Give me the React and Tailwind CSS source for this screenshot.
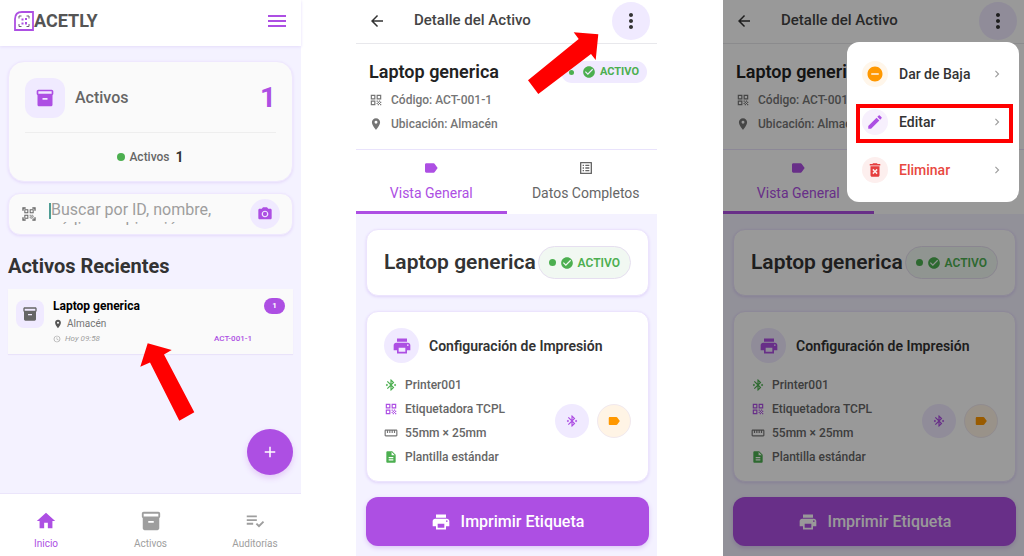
import {
    MdAdd, MdArrowBack, MdBluetoothConnected, MdCheckCircle, MdChevronRight, MdDeleteForever, MdDescription,
    MdEdit, MdHome, MdInventory2, MdLabel, MdListAlt, MdLocationOn, MdMenu, MdMoreVert, MdPhotoCamera,
    MdPlaylistAddCheck, MdPrint, MdQrCode, MdQrCodeScanner, MdRemoveCircle, MdSchedule, MdStraighten
} from 'react-icons/md';

const navItems = [
    { icon: MdHome, label: 'Inicio', color: 'text-[#ad4fe3]' },
    { icon: MdInventory2, label: 'Activos', color: 'text-[#9e9e9e]' },
    { icon: MdPlaylistAddCheck, label: 'Auditorías', color: 'text-[#9e9e9e]' }
];

const printSettings = [
    { icon: MdBluetoothConnected, text: 'Printer001', color: 'text-[#4caf50]' },
    { icon: MdQrCode, text: 'Etiquetadora TCPL', color: 'text-[#ad4fe3]' },
    { icon: MdStraighten, text: '55mm × 25mm', color: 'text-[#757575]' },
    { icon: MdDescription, text: 'Plantilla estándar', color: 'text-[#4caf50]' }
];

const menuItems = [
    { icon: MdRemoveCircle, text: 'Dar de Baja', color: 'text-[#ff9800]', bg: 'bg-[#fff6ea]', label: 'text-[#333]' },
    { icon: MdEdit, text: 'Editar', color: 'text-[#ad4fe3]', bg: 'bg-[#f7f0fd]', label: 'text-[#333]' },
    { icon: MdDeleteForever, text: 'Eliminar', color: 'text-[#e53e3e]', bg: 'bg-[#fdefee]', label: 'text-[#e8483f]' }
];

const Logo = () => (
    <div className="flex items-center">
        <svg viewBox="0 0 20 20" className="h-5 w-5" fill="none" stroke="#ad4fe3">
            <path d="M1 19V8Q1 1 8 1H19V19Z" strokeWidth="1.8" />
            <path d="M5 7.500V5H7.500M12.500 5H15V7.500M5 13V15.500H7.500M12.500 15.500H15V13" stroke="#6b5a78" strokeWidth="1" />
            <path d="M7.500 7.500H9.500V9.500H7.500ZM11 7H13V9H11ZM7.500 11.500H9.500V13.500H7.500ZM11 11H13V13.500H11Z" fill="#ad4fe3" stroke="none" />
        </svg>
        <span className="text-lg font-bold text-[#555]">ACETLY</span>
    </div>
);

const HomeScreen = () => (
    <section className="relative flex min-h-screen min-w-0 flex-1 flex-col bg-[#f4f2ff]">
        <header className="flex h-[46px] items-center justify-between bg-white pr-3 pb-1 pl-3.5 shadow-[0_1px_3px_#e4dcfb]">
            <Logo />
            <button aria-label="Menú" className="text-[#ad4fe3]">
                <MdMenu className="h-6 w-6" />
            </button>
        </header>

        <main className="flex flex-1 flex-col px-2 pt-[15px]">
            {/* Summary */}
            <div className="rounded-2xl border border-[#efe8fe] bg-[#fafafa] px-4 pt-4 pb-3.5 shadow-[0_1px_3px_#e4d8fb]">
                <div className="flex items-center">
                    <div className="flex h-10 w-10 items-center justify-center rounded-xl bg-[#f0eaff]">
                        <MdInventory2 className="h-5 w-5 text-[#ad4fe3]" />
                    </div>
                    <span className="ml-2.5 flex-1 text-base font-medium text-[#666]">Activos</span>
                    <span className="text-[28px] leading-8 font-bold text-[#ad4fe3]">1</span>
                </div>
                <div className="mt-3.5 flex items-center justify-center border-t border-[#eee] pt-3.5">
                    <span className="mr-1 h-2 w-2 rounded-full bg-[#4caf50]" />
                    <span className="text-xs font-medium text-[#666]">Activos</span>
                    <span className="ml-1.5 text-sm font-bold text-[#333]">1</span>
                </div>
            </div>

            {/* Search */}
            <div className="mt-[11px] flex h-[42px] items-center rounded-xl border border-[#efe8fe] bg-[#fafafa] px-3 shadow-[0_1px_3px_#e4d8fb]">
                <MdQrCodeScanner className="h-4 w-4 text-[#666]" />
                <div className="ml-3 flex h-[22px] flex-1 items-center overflow-hidden">
                    <span className="h-4 w-0.5 shrink-0 self-start bg-[#4f9d94]" />
                    <textarea
                        aria-label="Buscar activo"
                        placeholder="Buscar por ID, nombre, código o ubicación"
                        className="h-7 w-full shrink-0 resize-none overflow-hidden text-base leading-[19px] outline-none placeholder:text-[#9e9e9e]"
                    />
                </div>
                <button aria-label="Cámara" className="ml-4 flex h-[30px] w-[30px] items-center justify-center rounded-full bg-[#f0eaff] text-[#ad4fe3]">
                    <MdPhotoCamera className="h-4 w-4" />
                </button>
            </div>

            <h2 className="mt-[17px] text-xl font-bold text-[#333]">Activos Recientes</h2>

            <article className="mt-[9px] flex bg-[#fafafa] px-2 pt-[9px] pb-2 shadow-[0_1px_1px_#e9e3fa]">
                <div className="mt-0.5 flex h-7 w-7 items-center justify-center rounded-lg bg-[#f0eaff]">
                    <MdInventory2 className="h-4 w-4 text-[#666]" />
                </div>
                <div className="ml-[9px] flex-1">
                    <div className="flex justify-between">
                        <h3 className="text-xs font-bold text-black">Laptop generica</h3>
                        <span className="flex h-4 w-[21px] items-center justify-center rounded-full bg-[#ad4fe3] text-[8px] font-bold text-white">1</span>
                    </div>
                    <p className="mt-0.5 flex items-center gap-1 text-[10px] leading-4 text-[#757575]">
                        <MdLocationOn className="h-2.5 w-2.5 text-[#555]" />
                        Almacén
                    </p>
                    <div className="flex items-center justify-between pr-[33px] text-[8px] leading-[14px]">
                        <span className="flex items-center gap-1 text-[#9e9e9e] italic">
                            <MdSchedule className="h-2 w-2" />
                            Hoy 09:58
                        </span>
                        <span className="font-medium text-[#ad4fe3]">ACT-001-1</span>
                    </div>
                </div>
            </article>

            <button aria-label="Agregar" className="mt-auto mb-[18px] flex h-[46px] w-[46px] items-center justify-center self-end rounded-full bg-[#ad4fe3] text-white shadow-[0_3px_6px_#e3c9f7]">
                <MdAdd className="h-[18px] w-[18px]" />
            </button>
        </main>

        <nav className="flex h-[63px] justify-between border-t border-[#ebe5fb] bg-white px-3.5 pt-4">
            {navItems.map(({ icon: Icon, label, color }) => (
                <a key={label} href="#" className={`flex w-16 flex-col items-center gap-1 text-[10px] leading-4 ${color}`}>
                    <Icon className="h-[22px] w-[22px]" />
                    {label}
                </a>
            ))}
        </nav>

        <svg viewBox="0 0 56 80" className="absolute top-[342px] left-[140px] h-20 w-14" fill="#f00">
            <path d="M7.700 1.300L31.700 8L24 12.500L54.300 70.300L39.300 78.700L10 20.500L0.300 24.700Z" />
        </svg>
    </section>
);

const DetailScreen = ({ children }) => (
    <section className="relative min-h-screen min-w-0 flex-1 bg-[#f4f2ff]">
        <div className="bg-white">
            <header className="flex h-11 items-center border-b border-[#e8e8ec] pr-[7px] pb-0.5 pl-3">
                <button aria-label="Volver" className="text-[#333]">
                    <MdArrowBack className="h-[18px] w-[18px]" />
                </button>
                <h1 className="ml-7 flex-1 text-[15px] font-medium text-[#444]">Detalle del Activo</h1>
                <button aria-label="Más opciones" className="flex h-[38px] w-[38px] items-center justify-center rounded-full bg-[#f0eaff] text-[#333]">
                    <MdMoreVert className="h-6 w-6" />
                </button>
            </header>

            <div className="border-b border-[#e9e3fc] pt-4 pr-2.5 pb-[13px] pl-[13px]">
                <div className="flex items-center justify-between">
                    <h2 className="text-lg leading-6 font-semibold whitespace-nowrap text-[#222]">Laptop generica</h2>
                    <span className="flex h-[22px] items-center rounded-full bg-[#f0eaff] px-2 text-[11px] font-bold text-[#4caf50]">
                        <span className="mr-2 h-[5px] w-[5px] rounded-full bg-[#4caf50]" />
                        <MdCheckCircle className="mr-1 h-3.5 w-3.5" />
                        ACTIVO
                    </span>
                </div>
                <p className="mt-1 flex h-6 items-center gap-2 text-xs font-medium text-[#757575]">
                    <MdQrCode className="h-3.5 w-3.5" />
                    Código: ACT-001-1
                </p>
                <p className="flex h-6 items-center gap-2 text-xs font-medium text-[#757575]">
                    <MdLocationOn className="h-3.5 w-3.5" />
                    Ubicación: Almacén
                </p>
            </div>

            <div className="grid h-16 grid-cols-2 text-sm">
                <button className="flex flex-col items-center gap-[7px] border-b-[3px] border-[#ad4fe3] pt-2.5 text-[#ad4fe3]">
                    <MdLabel className="h-4 w-4" />
                    Vista General
                </button>
                <button className="flex flex-col items-center gap-[7px] pt-2.5 pl-2 text-[#666]">
                    <MdListAlt className="h-4 w-4" />
                    Datos Completos
                </button>
            </div>
        </div>

        <main className="flex flex-col gap-[15px] pt-[15px] pr-2 pb-2.5 pl-2.5">
            <div className="flex h-[67px] items-center justify-between rounded-xl border border-[#ece4fd] bg-white px-[17px] shadow-[0_1px_3px_#e0d4fa]">
                <h2 className="text-[21px] font-semibold whitespace-nowrap text-[#333]">Laptop generica</h2>
                <span className="flex h-[33px] items-center rounded-full border border-[#e6dff0] bg-[#f1f8f2] px-2.5 text-xs font-semibold text-[#4caf50]">
                    <span className="mr-1 h-[7px] w-[7px] rounded-full bg-[#4caf50]" />
                    <MdCheckCircle className="mr-1 h-3.5 w-3.5" />
                    ACTIVO
                </span>
            </div>

            <div className="rounded-xl border border-[#ece4fd] bg-white px-[17px] pt-4 pb-3 shadow-[0_1px_3px_#e0d4fa]">
                <div className="flex items-center gap-2.5">
                    <div className="flex h-[35px] w-[35px] items-center justify-center rounded-full bg-[#f0eaff]">
                        <MdPrint className="h-5 w-5 text-[#ad4fe3]" />
                    </div>
                    <h3 className="text-sm font-semibold text-[#333]">Configuración de Impresión</h3>
                </div>
                <div className="mt-2.5 flex items-center justify-between">
                    <ul className="flex flex-col text-xs font-medium text-[#666]">
                        {printSettings.map(({ icon: Icon, text, color }) => (
                            <li key={text} className="flex h-6 items-center gap-[7px]">
                                <Icon className={`h-3.5 w-3.5 ${color}`} />
                                {text}
                            </li>
                        ))}
                    </ul>
                    <div className="flex gap-2">
                        <button aria-label="Bluetooth" className="flex h-[34px] w-[34px] items-center justify-center rounded-full bg-[#f0eaff] text-[#ad4fe3]">
                            <MdBluetoothConnected className="h-3.5 w-3.5" />
                        </button>
                        <button aria-label="Etiqueta" className="flex h-[34px] w-[34px] items-center justify-center rounded-full border border-[#f1e9ee] bg-[#fff4e5] text-[#ff9800]">
                            <MdLabel className="h-3.5 w-3.5" />
                        </button>
                    </div>
                </div>
            </div>

            <button className="flex h-[49px] items-center justify-center gap-2.5 rounded-xl bg-[#ad4fe3] text-base font-medium text-white shadow-[0_2px_5px_#dcc8f6]">
                <MdPrint className="h-5 w-5" />
                Imprimir Etiqueta
            </button>
        </main>
        {children}
    </section>
);

const OptionsMenu = () => (
    <>
        <div className="absolute inset-0 bg-black/40" />
        <div className="absolute top-[42px] right-[5px] w-[172px] rounded-xl bg-white py-2">
            {menuItems.map(({ icon: Icon, text, color, bg, label }) => (
                <button key={text} className="flex h-12 w-full items-center px-[15px]">
                    <span className={`flex h-[26px] w-[26px] items-center justify-center rounded-full ${bg} ${color}`}>
                        <Icon className="h-[18px] w-[18px]" />
                    </span>
                    <span className={`ml-[11px] flex-1 text-left text-sm font-medium ${label}`}>{text}</span>
                    <MdChevronRight className="h-3.5 w-3.5 text-[#9e9e9e]" />
                </button>
            ))}
        </div>
        <div className="absolute top-[104px] right-[11px] h-[39px] w-[157px] border-4 border-[#f00]" />
    </>
);

const App = () => (
    <div className="flex min-h-screen bg-white font-['Roboto',sans-serif]">
        <HomeScreen />
        <div className="ml-[55px] flex min-w-0 flex-1">
            <DetailScreen>
                <svg viewBox="0 0 72 64" className="absolute top-[31px] left-[171px] h-16 w-[72px]" fill="#f00">
                    <path d="M71.300 3.300L46.700 1.300L51.700 8L1 49.300L11.300 63L64 23L68.700 29Z" />
                </svg>
            </DetailScreen>
        </div>
        <div className="ml-[66px] flex min-w-0 flex-1">
            <DetailScreen>
                <OptionsMenu />
            </DetailScreen>
        </div>
    </div>
);

export default App;
